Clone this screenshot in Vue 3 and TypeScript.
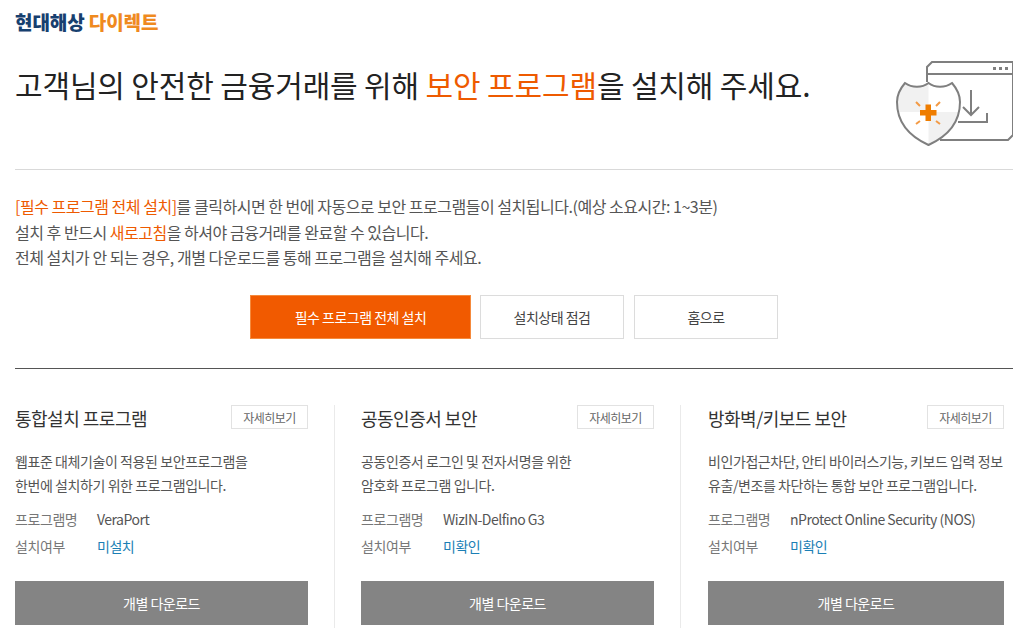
<script setup lang="ts">
interface Card { title: string; lines: string[]; name: string; status: string }
const cards: Card[] = [
  { title: '통합설치 프로그램', lines: ['웹표준 대체기술이 적용된 보안프로그램을', '한번에 설치하기 위한 프로그램입니다.'], name: 'VeraPort', status: '미설치' },
  { title: '공동인증서 보안', lines: ['공동인증서 로그인 및 전자서명을 위한', '암호화 프로그램 입니다.'], name: 'WizIN-Delfino G3', status: '미확인' },
  { title: '방화벽/키보드 보안', lines: ['비인가접근차단, 안티 바이러스기능, 키보드 입력 정보', '유출/변조를 차단하는 통합 보안 프로그램입니다.'], name: 'nProtect Online Security (NOS)', status: '미확인' },
]
</script>

<template>
  <div class="page">
    <div class="logo"><span class="navy">현대해상</span> <span class="amber">다이렉트</span></div>
    <header class="head">
      <h1>고객님의 안전한 금융거래를 위해 <em>보안 프로그램</em>을 설치해 주세요.</h1>
      <svg class="hero" width="126" height="95" viewBox="890 55 126 95" fill="none">
        <path d="M927 82V67l5-5h81v73l-5 5h-68M927 74h86" stroke="#7f7f7f" stroke-width="2" />
        <g fill="#7f7f7f"><rect x="993" y="67" width="3" height="3"/><rect x="999" y="67" width="3" height="3"/><rect x="1005" y="67" width="3" height="3"/></g>
        <path d="M971 90v25M963 107l8 8 8-8M958 122h29v-9" stroke="#7f7f7f" stroke-width="2" />
        <path d="M905 83c7 5 17 5 23.500 0 6.500 5 16.500 5 23.500 0 6 7 8 13 8 19 0 22-14 35-31.500 43-17.500-8-31.500-21-31.500-43 0-6 2-12 8-19Z" fill="#fff" />
        <path d="M928.500 83c-6.500 5-16.500 5-23.500 0-6 7-8 13-8 19 0 4 .4 7 1 10h30.500ZM928.500 112h30.500c-4 16-15 26-30.500 33Z" fill="#f1f1f1" />
        <path d="M905 83c7 5 17 5 23.500 0 6.500 5 16.500 5 23.500 0 6 7 8 13 8 19 0 22-14 35-31.500 43-17.500-8-31.500-21-31.500-43 0-6 2-12 8-19Z" stroke="#7f7f7f" stroke-width="2" />
        <path d="M925.500 104.500h5.500v5.500h5.500v5.500H931v5.500h-5.500v-5.500H920v-5.500h5.500Z" fill="#ef7d00" />
        <path d="M916 102l4 4M940 102l-4 4M916 124l4-3M940 124l-4-3" stroke="#f39a45" stroke-width="2" />
      </svg>
    </header>

    <section class="notice">
      <p><em>[필수 프로그램 전체 설치]</em>를 클릭하시면 한 번에 자동으로 보안 프로그램들이 설치됩니다.(예상 소요시간: 1~3분)</p>
      <p>설치 후 반드시 <em>새로고침</em>을 하셔야 금융거래를 완료할 수 있습니다.</p>
      <p>전체 설치가 안 되는 경우, 개별 다운로드를 통해 프로그램을 설치해 주세요.</p>
    </section>

    <div class="actions">
      <button class="btn primary">필수 프로그램 전체 설치</button>
      <button class="btn check">설치상태 점검</button>
      <button class="btn home">홈으로</button>
    </div>

    <section class="cards">
      <article v-for="c in cards" :key="c.title" class="card">
        <div class="card-top">
          <h2>{{ c.title }}</h2>
          <button class="more">자세히보기</button>
        </div>
        <p class="desc"><span v-for="l in c.lines" :key="l">{{ l }}</span></p>
        <dl>
          <div><dt>프로그램명</dt><dd>{{ c.name }}</dd></div>
          <div><dt>설치여부</dt><dd class="status">{{ c.status }}</dd></div>
        </dl>
        <button class="download">개별 다운로드</button>
      </article>
    </section>
  </div>
</template>

<style>
html, body { margin: 0; height: 628px; overflow: hidden; background: #fff; }
</style>

<style scoped>
.page { width: 998px; height: 628px; overflow: hidden; margin-left: 15px; font-family: "Noto Sans CJK KR", "Noto Sans", sans-serif; color: #555; }
.logo { height: 45px; padding-top: 8px; box-sizing: border-box; font-size: 19px; line-height: 28px; font-weight: 900; letter-spacing: -0.1px; }
.navy { color: #17406f; }
.amber { color: #ef8a1f; }
.head { height: 125px; box-sizing: border-box; border-bottom: 1px solid #d9d9d9; display: flex; justify-content: space-between; }
h1 { margin: 0; padding-top: 17px; font-size: 30px; line-height: 44px; font-weight: 400; color: #222; letter-spacing: -0.15px; }
em { font-style: normal; color: #ee5a00; }
.hero { margin: 10px -3px 0 0; flex: none; }
.notice { padding-top: 24px; font-size: 16px; line-height: 25.5px; letter-spacing: -0.48px; }
.notice p { margin: 0; }
.actions { display: flex; margin-top: 24.5px; padding-left: 235px; gap: 10px; }
.btn { height: 44px; box-sizing: border-box; border: 1px solid #dcdcdc; background: #fff; font: inherit; font-size: 14px; color: #444; letter-spacing: -0.5px; padding: 0; }
.primary { width: 221px; background: #f15a00; border-color: #f58a3c; color: #fff; }
.check { width: 144px; margin-left: -1px; }
.home { width: 144px; }
.cards { margin-top: 29px; border-top: 1px solid #555; display: flex; padding-top: 36px; }
.card { box-sizing: border-box; position: relative; height: 230px; }
.card:nth-child(1), .card:nth-child(2) { width: 293px; }
.card:nth-child(2) { margin-left: 53px; }
.card:nth-child(3) { width: 296px; margin-left: 54px; }
.card:nth-child(n+2)::before { content: ""; position: absolute; left: -27px; top: 0; bottom: 0; width: 1px; background: #eaeaea; }
.card:nth-child(3)::before { left: -28px; }
.card-top { display: flex; justify-content: space-between; align-items: flex-start; height: 36px; }
h2 { margin: 0; font-size: 18px; line-height: 26px; font-weight: 400; color: #333; letter-spacing: -0.5px; }
.more { width: 77px; height: 24px; box-sizing: border-box; border: 1px solid #e2e2e2; background: #fff; font: inherit; font-size: 12px; color: #666; letter-spacing: -0.5px; padding: 0; }
.desc { margin: 9px 0 0; font-size: 14px; line-height: 23.5px; letter-spacing: -0.42px; color: #555; }
.desc span { display: block; }
dl { margin: 9px 0 0; font-size: 14px; line-height: 27px; letter-spacing: -0.42px; }
dl div { display: flex; }
dt { width: 82px; color: #777; }
dd { margin: 0; color: #555; letter-spacing: -0.5px; }
.status { color: #1b7fb5; }
.download { display: block; width: 100%; margin-top: 21px; height: 44px; border: 0; background: #848484; color: #fff; font: inherit; font-size: 14px; letter-spacing: -0.5px; padding: 0; }
</style>
